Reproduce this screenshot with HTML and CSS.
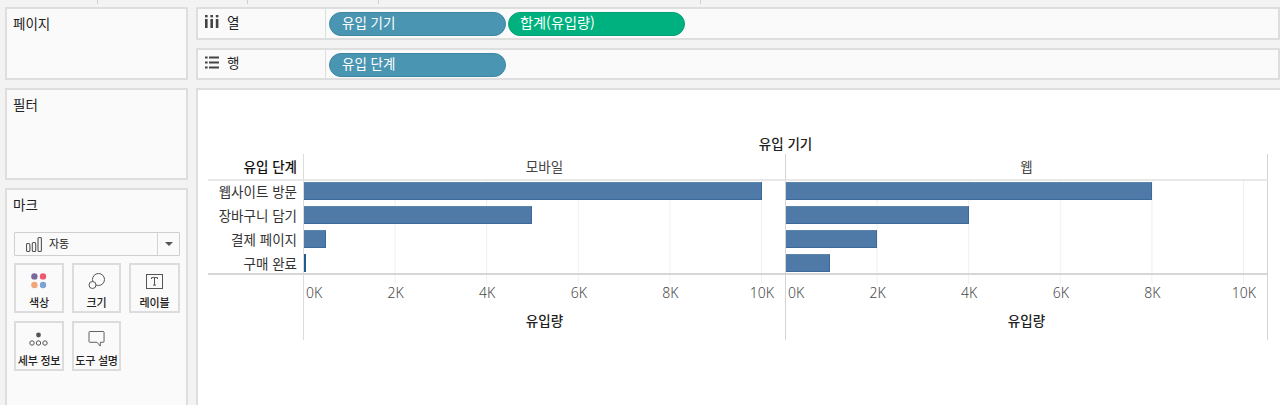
FILE: index.html
```html
<!DOCTYPE html>
<html lang="ko">
<head>
<meta charset="utf-8">
<title>유입 단계</title>
<link rel="stylesheet" href="styles.css">
</head>
<body>
<div class="topstrip"><i class="seg s1"></i><i class="seg s2"></i><i class="seg s3"></i><i class="seg s4"></i></div>
<div class="main">
  <aside class="side">
    <section class="card pages"><h2>페이지</h2></section>
    <section class="card filters"><h2>필터</h2></section>
    <section class="card marks">
      <h2>마크</h2>
      <div class="select">
        <div class="select-val">
          <svg width="16" height="15" viewBox="0 0 16 15" fill="none" stroke="#555" stroke-width="1.1"><rect x="0.5" y="6.5" width="3.4" height="8" rx="1.2"/><rect x="6.3" y="5.5" width="3.4" height="9" rx="1.2"/><rect x="12" y="0.5" width="3.4" height="14" rx="1.2"/></svg>
          <span>자동</span>
        </div>
        <div class="select-arrow"><b></b></div>
      </div>
      <div class="mark-grid">
        <div class="mbtn">
          <svg width="16" height="16" viewBox="0 0 16 16"><circle cx="3.400" cy="3.400" r="3.200" fill="#7a6a9c"/><circle cx="12" cy="3.400" r="3.200" fill="#f0586f"/><circle cx="3.400" cy="12" r="3.200" fill="#f2a57a"/><circle cx="12" cy="12" r="3.200" fill="#7ba3d2"/></svg>
          <span>색상</span>
        </div>
        <div class="mbtn">
          <svg width="18" height="16" viewBox="0 0 18 16" fill="none" stroke="#555" stroke-width="1"><circle cx="10.500" cy="6.500" r="6"/><circle cx="4.500" cy="12" r="3.500" fill="#fafafa"/></svg>
          <span>크기</span>
        </div>
        <div class="mbtn">
          <svg width="18" height="16" viewBox="0 0 18 16" fill="none"><rect x="0.5" y="1.500" width="16" height="14" stroke="#555" stroke-width="1"/><path d="M5.500 6V4.600h6V6M8.500 4.600v7.500M7 12.100h3" stroke="#555" stroke-width="1"/></svg>
          <span>레이블</span>
        </div>
        <div class="mbtn">
          <svg width="20" height="16" viewBox="0 0 20 16" fill="none" stroke="#555" stroke-width="1"><circle cx="9.500" cy="4" r="2.400" fill="#555" stroke="none"/><circle cx="3" cy="12" r="2.200"/><circle cx="9.500" cy="12" r="2.200"/><circle cx="16" cy="12" r="2.200"/></svg>
          <span>세부 정보</span>
        </div>
        <div class="mbtn">
          <svg width="18" height="17" viewBox="0 0 18 17" fill="none" stroke="#555" stroke-width="1"><path d="M1.500 0.500h14a1 1 0 0 1 1 1v9.500a1 1 0 0 1-1 1h-3v4l-3.500-4h-7.500a1 1 0 0 1-1-1V1.500a1 1 0 0 1 1-1z"/></svg>
          <span>도구 설명</span>
        </div>
      </div>
    </section>
  </aside>
  <div class="content">
    <div class="card shelf">
      <div class="shelf-label">
        <svg width="14" height="13" viewBox="0 0 14 13" fill="#444"><rect x="0" y="0" width="2.600" height="2.400"/><rect x="0" y="4" width="2.600" height="9"/><rect x="5.400" y="0" width="2.600" height="2.400"/><rect x="5.400" y="4" width="2.600" height="9"/><rect x="10.800" y="0" width="2.600" height="2.400"/><rect x="10.800" y="4" width="2.600" height="9"/></svg>
        <span>열</span>
      </div>
      <div class="pills"><div class="pill blue">유입 기기</div><div class="pill green">합계(유입량)</div></div>
    </div>
    <div class="card shelf row">
      <div class="shelf-label">
        <svg width="14" height="13" viewBox="0 0 14 13" fill="#444"><rect x="0" y="0.500" width="2.600" height="2"/><rect x="4" y="0.500" width="10" height="2"/><rect x="0" y="5.500" width="2.600" height="2"/><rect x="4" y="5.500" width="10" height="2"/><rect x="0" y="10.500" width="2.600" height="2"/><rect x="4" y="10.500" width="10" height="2"/></svg>
        <span>행</span>
      </div>
      <div class="pills"><div class="pill blue">유입 단계</div></div>
    </div>
    <div class="card view">
      <div class="chart">
        <div class="chart-title">유입 기기</div>
        <div class="chart-grid">
          <div class="corner">유입 단계</div>
          <div class="head p1">모바일</div>
          <div class="head p2">웹</div>

          <div class="labels">
            <div>웹사이트 방문</div><div>장바구니 담기</div><div>결제 페이지</div><div>구매 완료</div>
          </div>
          <div class="plot p1">
            <div class="bar" style="width:458px"></div>
            <div class="bar" style="width:228px"></div>
            <div class="bar" style="width:22px"></div>
            <div class="bar" style="width:2px"></div>
          </div>
          <div class="plot p2">
            <div class="bar" style="width:366px"></div>
            <div class="bar" style="width:183px"></div>
            <div class="bar" style="width:91px"></div>
            <div class="bar" style="width:44px"></div>
          </div>

          <div class="axis-gap"></div>
          <div class="axis p1">
            <div class="ticks"><span class="first">0K</span><span>2K</span><span>4K</span><span>6K</span><span>8K</span><span>10K</span></div>
            <div class="axis-title">유입량</div>
          </div>
          <div class="axis p2">
            <div class="ticks"><span class="first">0K</span><span>2K</span><span>4K</span><span>6K</span><span>8K</span><span>10K</span></div>
            <div class="axis-title">유입량</div>
          </div>
        </div>
      </div>
    </div>
  </div>
</div>
</body>
</html>
```

FILE: styles.css
```css
* { box-sizing: border-box; }
html, body { margin: 0; height: 405px; overflow: hidden; }
body {
  background: #f3f3f3;
  font-family: "Noto Sans CJK KR", "Noto Sans", sans-serif;
  font-size: 13.500px;
  color: #222;
}
.topstrip { display: flex; height: 7px; }
.seg { display: block; height: 4px; border-right: 1px solid #d0d0d0; }
.s1 { width: 98px; }
.s2 { width: 150px; }
.s3 { width: 131px; }
.s4 { width: 322px; }

.main { display: flex; height: 398px; padding-left: 5px; gap: 8px; }
.side { width: 183px; display: flex; flex-direction: column; gap: 8px; flex: none; }
.content { flex: 1; display: flex; flex-direction: column; gap: 8px; min-width: 0; }
.card { border: 2px solid #dedede; background: #fafafa; }
h2 { margin: 0; font-size: 13.500px; font-weight: 400; line-height: 18px; color: #222; }

.pages { height: 73px; padding: 5px 6px; }
.filters { height: 92px; padding: 5px 6px; }
.marks { flex: 1; padding: 5px 6px 0; border-bottom: 0; }

.select { margin: 19px 0 0 1px; height: 24px; width: 166px; border: 1.500px solid #cfcfcf; display: flex; background: #fafafa; border-radius: 1px; }
.select-val { flex: 1; display: flex; align-items: center; gap: 7px; padding-left: 11px; font-size: 11px; border-right: 1px solid #d4d4d4; }
.select-val svg { margin-top: 1px; }
.select-val span { margin-top: -3px; }
.select-arrow { width: 21px; display: flex; align-items: center; justify-content: center; }
.select-arrow b { width: 0; height: 0; border-left: 4px solid transparent; border-right: 4px solid transparent; border-top: 4px solid #555; }

.mark-grid { display: grid; grid-template-columns: 50px 49px 51px; gap: 8px; margin: 7px 0 0 1px; width: 166px; }
.mbtn { height: 50px; border: 2px solid #dcdcdc; display: flex; flex-direction: column; align-items: center; padding-top: 8px; font-size: 11px; font-weight: 500; color: #222; white-space: nowrap; background: #fafafa; }
.mbtn svg { flex: none; height: 16px; }
.mbtn span { margin-top: 5px; line-height: 16px; letter-spacing: -0.2px; }

.shelf { display: flex; height: 33px; }
.shelf.row { height: 32px; }
.shelf-label { width: 128px; display: flex; align-items: center; gap: 8px; padding-left: 7px; border-right: 1px solid #dedede; font-size: 13.500px; flex: none; padding-bottom: 4px; }
.pills { display: flex; gap: 2px; padding: 3px; }
.pill { width: 177px; height: 24px; border-radius: 12px; color: #fff; font-size: 13.500px; line-height: 19px; padding-left: 12px; }
.blue { background: #4a95b2; border: 1px solid #3f86a2; }
.green { background: #00b180; border: 1px solid #04a276; font-size: 14.200px; padding-left: 11px; }

.view { flex: 1; background: #fff; border-bottom: 0; border-right: 0; padding: 43px 0 0 10px; }
.chart { width: 1060px; }
.chart-title { padding-left: 95px; height: 21px; text-align: center; font-size: 13.500px; font-weight: 500; line-height: 20px; color: #222; }
.chart-grid { display: grid; grid-template-columns: 95px 482px 483px; grid-template-rows: 27px 94px 65px; }
.corner { border-bottom: 2px solid #e8e8e8; text-align: right; padding-right: 6px; font-size: 13.500px; font-weight: 500; line-height: 25px; color: #111; }
.head { border-bottom: 2px solid #e8e8e8; text-align: center; font-size: 13.500px; line-height: 25px; color: #444; }

.p1 { border-left: 1px solid #dcdcdc; }
.p2 { border-left: 1px solid #d4d4d4; border-right: 1px solid #d4d4d4; }

.labels { border-bottom: 2px solid #d6d6d6; text-align: right; padding-right: 6px; font-size: 13.500px; color: #333; }
.labels div { height: 24px; line-height: 20px; }

.plot {
  border-bottom: 2px solid #d6d6d6;
  padding-top: 1px;
  display: flex;
  flex-direction: column;
  gap: 6px;
  background-image: linear-gradient(to right, transparent 90.600px, #efefef 90.600px);
  background-size: 91.600px 100%;
  background-repeat: repeat-x;
}
.bar { height: 18px; flex: none; background: #4f79a7; border: 1px solid #3a6a9b; border-left-width: 0; border-top-color: #5c84b0; }
.plot.p1 .bar:last-child { background: #22598f; border: 0; }

.axis {
  background-image: linear-gradient(to right, transparent 90.600px, #efefef 90.600px);
  background-size: 91.600px 9px;
  background-repeat: repeat-x;
}
.ticks { display: flex; padding-top: 7px; height: 34px; font-family: "Noto Sans", sans-serif; font-size: 14px; color: #4a4a4a; line-height: 22px; font-weight: 300; }
.ticks span { flex: 0 0 91.600px; text-align: center; white-space: nowrap; }
.ticks .first { flex: 0 0 45.800px; text-align: left; padding-left: 2px; }
.axis-title { text-align: center; font-size: 13.500px; font-weight: 500; line-height: 22px; color: #222; }
```
